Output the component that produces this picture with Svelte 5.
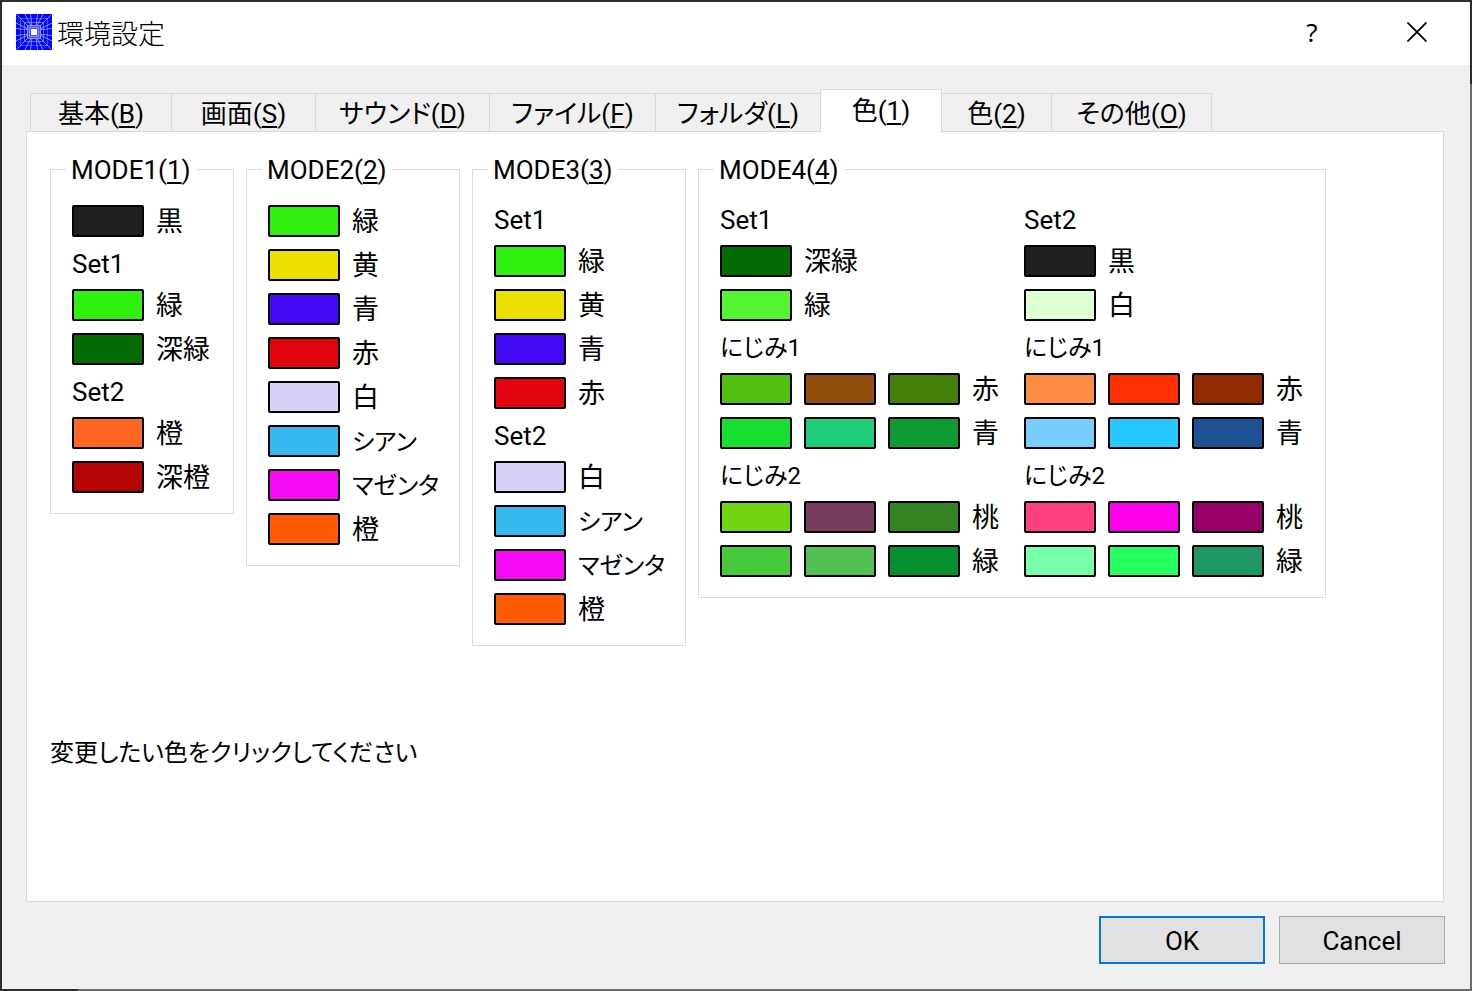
<script>
  const tabs = [
    ['基本', 'B'], ['画面', 'S'], ['サウンド', 'D'], ['ファイル', 'F'],
    ['フォルダ', 'L'], ['色', '1'], ['色', '2'], ['その他', 'O']
  ];
  let active = $state(5);

  // A string is a heading; an array is a label followed by its colours.
  const groups = [
    { n: 1, sets: [[['黒', '#202020'], 'Set1', ['緑', '#30f010'], ['深緑', '#046a04'], 'Set2', ['橙', '#ff6624'], ['深橙', '#b40404']]] },
    { n: 2, sets: [[['緑', '#30f010'], ['黄', '#ebe000'], ['青', '#4409f4'], ['赤', '#e2040c'], ['白', '#d6d0f6'], ['シアン', '#34b8ee'], ['マゼンタ', '#f60af6'], ['橙', '#ff5c04']]] },
    { n: 3, sets: [['Set1', ['緑', '#30f010'], ['黄', '#ebe000'], ['青', '#4409f4'], ['赤', '#e2040c'], 'Set2', ['白', '#d6d0f6'], ['シアン', '#34b8ee'], ['マゼンタ', '#f60af6'], ['橙', '#ff5c04']]] },
    { n: 4, sets: [
      ['Set1', ['深緑', '#046a04'], ['緑', '#54f634'],
        'にじみ1', ['赤', '#52c010', '#904e0c', '#44800a'], ['青', '#18de30', '#1ecc7c', '#0e9a32'],
        'にじみ2', ['桃', '#70d410', '#783c5e', '#348424'], ['緑', '#46ca3c', '#52c052', '#04902e']],
      ['Set2', ['黒', '#202020'], ['白', '#deffd2'],
        'にじみ1', ['赤', '#ff8c42', '#ff3000', '#922a00'], ['青', '#78ceff', '#26c8ff', '#1e5094'],
        'にじみ2', ['桃', '#ff4080', '#ff00ec', '#960068'], ['緑', '#78ffac', '#28ff60', '#1e9666']]
    ] }
  ];
  const isKana = (text) => /^[\u30a0-\u30ff]+$/.test(text);
</script>

<div class="window">
  <div class="dialog">
    <header>
      <svg class="logo" viewBox="0 0 36 36" aria-hidden="true">
        <rect width="36" height="36" rx="1" fill="#0008ff" />
        <g fill="none" stroke="#b4b8ff" stroke-width="1">
          <path d="M1 1L35 35M35 1L1 35M9 0L27 36M27 0L9 36M0 9L36 27M0 27L36 9" opacity=".75" />
          <path d="M14.500 0L16.500 18L14.500 36M21.500 0L19.500 18L21.500 36M0 14.500L18 16.500L36 14.500M0 21.500L18 19.500L36 21.500" opacity=".7" />
          <path d="M4.500 4.500H31.500V31.500H4.500Z" opacity=".4" />
          <path d="M8.500 8.500H27.500V27.500H8.500Z" opacity=".55" />
        </g>
        <rect x="11.500" y="11.500" width="13" height="13" fill="#4450ff" stroke="#8c94ff" />
        <rect x="13.500" y="13.500" width="9" height="9" fill="none" stroke="#a8b0ff" stroke-dasharray="2 1" />
        <rect x="15" y="15" width="6" height="6" fill="#fff" />
      </svg>
      <h1>環境設定</h1>
      <button class="caption" aria-label="ヘルプ">
        <span>?</span>
      </button>
      <button class="caption" aria-label="閉じる">
        <svg viewBox="0 0 20 20" width="20" height="20"><path d="M.5 .5L19.500 19.500M19.500 .5L.5 19.500" stroke="#000" stroke-width="1.800" /></svg>
      </button>
    </header>

    <main>
      <div class="tabs" role="tablist">
        {#each tabs as [name, key], i}
          <button class="tab" role="tab" class:active={active === i} aria-selected={active === i} onclick={() => (active = i)}>{name}(<u>{key}</u>)</button>
        {/each}
      </div>

      <section class="panel" role="tabpanel">
        <div class="groups">
          {#each groups as group}
            <fieldset>
              <legend>MODE{group.n}(<u>{group.n}</u>)</legend>
              <div class="sets">
                {#each group.sets as rows}
                  <div class="set">
                    {#each rows as row}
                      {#if typeof row === 'string'}
                        <div class="heading" class:kana={row.startsWith('にじみ')}>{row}</div>
                      {:else}
                        <div class="row">
                          {#each row.slice(1) as colour}
                            <button class="swatch" style:background={colour} aria-label={row[0]}></button>
                          {/each}
                          <span class="label" class:kana={isKana(row[0])}>{row[0]}</span>
                        </div>
                      {/if}
                    {/each}
                  </div>
                {/each}
              </div>
            </fieldset>
          {/each}
        </div>
        <p class="kana">変更したい色をクリックしてください</p>
      </section>
    </main>

    <footer>
      <button class="action default">OK</button>
      <button class="action">Cancel</button>
    </footer>
  </div>
</div>

<style>
  :global(body) { margin: 0; }

  .window {
    box-sizing: border-box;
    min-height: 100vh;
    padding: 2px;
    display: flex;
    background:
      linear-gradient(to right, #2d2d2d 78px, #6b6b6b 78px) bottom / 100% 2px no-repeat,
      linear-gradient(to bottom, #2d2d2d 84px, #6b6b6b 84px) right / 2px 100% no-repeat,
      #2d2d2d;
    font: 26px/30px Roboto, "Noto Sans CJK JP", sans-serif;
    font-feature-settings: "palt";
    color: #000;
  }
  .dialog {
    flex: 1;
    min-width: 0;
    display: flex;
    flex-direction: column;
    background: #f0f0f0;
  }
  button { font: inherit; color: inherit; padding: 0; }
  u { text-decoration-thickness: 2px; text-underline-offset: 3px; text-decoration-skip-ink: none; }

  header {
    box-sizing: border-box;
    display: flex;
    align-items: center;
    height: 63px;
    padding: 0 0 4px 14px;
    background: #fff;
  }
  .logo { width: 36px; height: 36px; }
  h1 {
    flex: 1;
    margin: 0;
    padding: 6px 0 0 5px;
    font-size: 27px;
    font-weight: 300;
  }
  .caption {
    width: 106px;
    height: 56px;
    border: 0;
    background: none;
    display: flex;
    align-items: center;
    justify-content: center;
  }
  .caption span { font-family: "Noto Sans", sans-serif; padding-left: 2px; }

  main {
    flex: 1;
    display: flex;
    flex-direction: column;
    padding: 24px 26px 0 24px;
  }
  .tabs {
    display: grid;
    grid-template-columns: 142px 144px 174px 166px 165px 121px 110px 160px;
    align-items: end;
    padding-left: 4px;
  }
  .tab {
    height: 38px;
    padding-top: 2px;
    border: 1px solid #d9d9d9;
    border-width: 1px 1px 0 0;
    background: none;
    white-space: nowrap;
  }
  .tab:first-child { border-left-width: 1px; }
  .tab.active {
    height: 44px;
    margin: 0 0 -2px -1px;
    padding: 0 0 2px;
    border-left-width: 1px;
    background: #fff;
    position: relative;
  }
  .panel {
    flex: 1;
    padding: 22px 23px;
    border: 1px solid #d9d9d9;
    background: #fff;
  }

  .groups {
    display: grid;
    grid-template-columns: 184px 214px 214px 628px;
    gap: 12px;
    align-items: start;
  }
  fieldset {
    min-width: 0;
    margin: 0;
    padding: 21px 15px 20px;
    border: 1px solid #dcdcdc;
  }
  legend { padding: 1px 5px 0; height: 29px; }
  .sets { display: flex; gap: 24px; padding-left: 6px; }
  .set { display: flex; flex-direction: column; gap: 12px; min-width: 280px; }
  .set:only-child { min-width: 0; }
  .heading { height: 28px; }
  .row { display: flex; align-items: center; gap: 12px; height: 32px; white-space: nowrap; }
  .swatch {
    flex: none;
    width: 72px;
    height: 32px;
    border: 2px solid #000;
    border-radius: 2px;
  }
  .label { padding-top: 2px; font-size: 27px; }
  .kana { font-size: 24px; }
  p { margin: 92px 0 0; }

  footer {
    display: flex;
    justify-content: flex-end;
    gap: 14px;
    padding: 14px 25px 25px;
  }
  .action {
    width: 166px;
    height: 48px;
    padding-top: 2px;
    border: 1px solid #adadad;
    background: #e1e1e1;
  }
  .action.default { border: 2px solid #0078d7; padding-top: 2px; }
</style>
